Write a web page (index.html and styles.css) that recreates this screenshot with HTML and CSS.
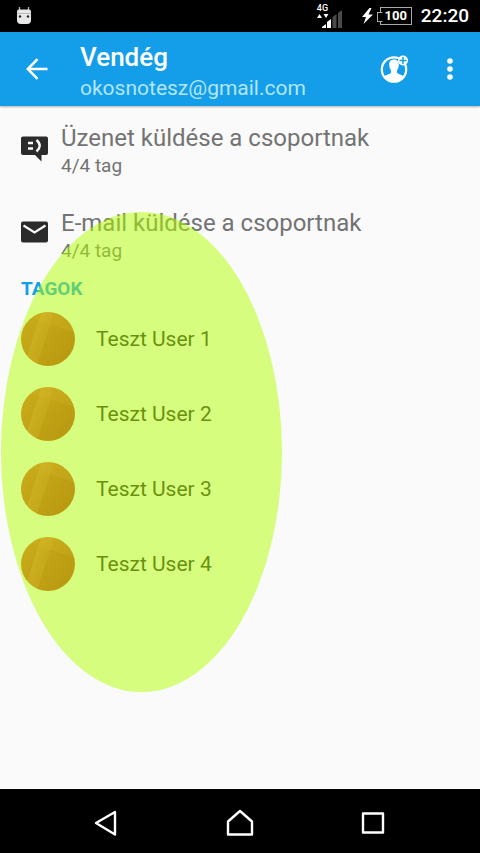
FILE: index.html
```html
<!DOCTYPE html>
<html lang="hu">
<head>
<meta charset="utf-8">
<meta name="viewport" content="width=device-width, initial-scale=1">
<title>Vendég</title>
<link rel="stylesheet" href="styles.css">
</head>
<body>
<div class="status">
  <svg class="status-robot" width="16" height="20" viewBox="0 0 16 20" aria-hidden="true">
    <path d="M3.500 1v4M12.500 1v4" stroke="#bbb" stroke-width="1.300"/>
    <path d="M1 5.500q0-2 2-2h10q2 0 2 2V14q0 4-4 4H5q-4 0-4-4z" fill="#e8e8e8"/>
    <path d="M1 7.500h14" stroke="#999" stroke-width=".6"/>
    <circle cx="4" cy="10.500" r="1.200" fill="#222"/><circle cx="12" cy="10.500" r="1.200" fill="#222"/>
  </svg>
  <div class="signal">
    <span class="network">4G</span>
    <svg width="26" height="16" viewBox="0 0 26 16" aria-hidden="true">
      <path d="M0 5l2.500-4L5 5zM6.500 1h5L9 5z" fill="#fff"/>
      <path d="M5 15v-1l4-3v4z" fill="#fff"/>
      <path d="M10 15V9l4-3v9z" fill="#fff"/>
      <path d="M15.500 15V4l4-3v14zM21 15V0l4-3v18z" fill="#4a4a4a"/>
    </svg>
  </div>
  <svg class="bolt" width="11" height="16" viewBox="0 0 11 16" aria-hidden="true"><path d="M7.500 0L0 9h4L1.500 16 11 6.500H6.500L9.500 0z" fill="#fff"/></svg>
  <div class="battery"><span>100</span></div>
  <time class="clock">22:20</time>
</div>
<header class="appbar">
  <button class="icon-button" aria-label="Vissza">
    <svg width="22" height="22" viewBox="0 0 22 22" fill="none" stroke="#fff" stroke-width="2.500"><path d="M21.500 11H2M11.500 1.200L1.800 11l9.700 9.800"/></svg>
  </button>
  <div class="heading">
    <h1>Vendég</h1>
    <p>okosnotesz@gmail.com</p>
  </div>
  <button class="icon-button" aria-label="Tag hozzáadása">
    <svg width="30" height="30" viewBox="0 0 30 30">
      <circle cx="15" cy="15.500" r="12.200" fill="none" stroke="#fff" stroke-width="2.200"/>
      <path d="M15 5.500c3.400 0 4.800 2.200 4.800 5.200 0 2.600-.9 4.300-1.800 5.500v2.200c0 1.600 5.500 1.900 7.400 4.600-2 3-5.700 5-10.400 5s-8.400-2-10.400-5c1.900-2.700 7.400-3 7.400-4.600v-2.200c-.9-1.200-1.800-2.900-1.800-5.500 0-3 1.400-5.200 4.800-5.200z" fill="#fff"/>
      <circle cx="24" cy="6.500" r="5" fill="#fff"/>
      <path d="M24 3v7M20.500 6.500h7" stroke="#149ee9" stroke-width="1.500"/>
    </svg>
  </button>
  <button class="icon-button menu" aria-label="További lehetőségek">
    <svg width="6" height="24" viewBox="0 0 6 24" fill="#fff"><circle cx="3" cy="4" r="2.800"/><circle cx="3" cy="12" r="2.800"/><circle cx="3" cy="20" r="2.800"/></svg>
  </button>
</header>
<main>
  <button class="action">
    <svg width="27" height="32" viewBox="0 0 27 32">
      <path d="M2 1.500h23q2 0 2 2V18q0 2-2 2h-4.500v6.500L14 20H2q-2 0-2-2V3.500q0-2 2-2z" fill="#2b2b2b"/>
      <path d="M7 8h5M7 13.500h5" stroke="#fafafa" stroke-width="2.400"/>
      <path d="M15.500 5q6.500 5.700 0 11.500" stroke="#fafafa" stroke-width="2.400" fill="none"/>
    </svg>
    <span class="action-text"><span class="action-title">Üzenet küldése a csoportnak</span><span class="action-sub">4/4 tag</span></span>
  </button>
  <button class="action">
    <svg width="27" height="32" viewBox="0 0 27 32">
      <rect x="0" y="1.500" width="27" height="21" rx="2" fill="#2b2b2b"/>
      <path d="M2.500 5.500l11 7 11-7" stroke="#fafafa" stroke-width="2.200" fill="none"/>
    </svg>
    <span class="action-text"><span class="action-title">E-mail küldése a csoportnak</span><span class="action-sub">4/4 tag</span></span>
  </button>
  <h2>TAGOK</h2>
  <ul class="members">
    <li><span class="avatar"></span>Teszt User 1</li>
    <li><span class="avatar"></span>Teszt User 2</li>
    <li><span class="avatar"></span>Teszt User 3</li>
    <li><span class="avatar"></span>Teszt User 4</li>
  </ul>
  <div class="highlight"></div>
</main>
<nav class="navbar">
  <button aria-label="Vissza"><svg width="28" height="28" viewBox="0 0 28 28"><path d="M3 14L22 3v22.500z"/></svg></button>
  <button aria-label="Kezdőlap"><svg width="28" height="28" viewBox="0 0 28 28"><path d="M2 12.500L14 2l12 10.500V25.500H2z"/></svg></button>
  <button aria-label="Áttekintés"><svg width="28" height="28" viewBox="0 0 28 28"><path d="M4 4.500h20v19H4z"/></svg></button>
</nav>
</body>
</html>
```
FILE: styles.css
```css
* { box-sizing: border-box; }
body {
  margin: 0;
  min-height: 100vh;
  display: flex;
  flex-direction: column;
  background: #fafafa;
  font-family: Roboto, "Liberation Sans", sans-serif;
}
h1, h2, p, ul { margin: 0; padding: 0; }
button {
  border: 0;
  padding: 0;
  background: none;
  font-family: inherit;
  color: inherit;
  text-align: left;
}
svg { display: block; flex: none; overflow: visible; }

.status {
  display: flex;
  align-items: center;
  height: 32px;
  padding: 0 11px 0 16px;
  background: #000;
  color: #fff;
}
.status-robot { margin-right: auto; }
.signal { margin-right: 19px; }
.network { display: block; font-size: 9px; line-height: 10px; font-weight: 500; }
.bolt { margin-right: 4px; }
.battery {
  position: relative;
  width: 32px;
  height: 18px;
  margin: 0 9px 0 3px;
  border: 1px solid #aaa;
  font-size: 13px;
  line-height: 16px;
  font-weight: 700;
  text-align: center;
}
.battery::before {
  content: "";
  position: absolute;
  left: -4px;
  top: 4px;
  width: 4px;
  height: 8px;
  border: 1px solid #aaa;
  border-right-color: #000;
  background: #000;
}
.clock { font-size: 19px; line-height: 32px; font-weight: 500; }

.appbar {
  position: relative;
  display: flex;
  align-items: center;
  height: 74px;
  padding: 0 12px 0 19px;
  background: #149ee9;
  color: #fff;
  box-shadow: 0 1px 2px rgba(0, 0, 0, .3);
}
.icon-button {
  display: flex;
  justify-content: center;
  align-items: center;
  width: 36px;
  height: 48px;
}
.icon-button.menu { margin-left: 20px; }
.heading { flex: 1; padding: 4px 0 0 25px; }
.heading h1 { font-size: 26px; line-height: 34px; font-weight: 500; }
.heading p { font-size: 21px; line-height: 28px; color: #b2e6fa; }

main { position: relative; flex: 1; padding-top: 2px; }
.action {
  display: flex;
  align-items: center;
  width: 100%;
  height: 85px;
  padding: 0 21px;
  gap: 13px;
}
.action-title { display: block; font-size: 24px; line-height: 30px; color: #737373; }
.action-sub { display: block; font-size: 19px; line-height: 26px; color: #737373; }
h2 {
  padding: 1px 21px 0;
  margin-bottom: 2px;
  font-size: 19px;
  line-height: 20px;
  font-weight: 700;
  color: #149ee9;
}
.members { list-style: none; }
.members li {
  display: flex;
  align-items: center;
  gap: 21px;
  height: 75px;
  padding: 0 21px;
  font-size: 21px;
  color: #212121;
}
.avatar {
  width: 54px;
  height: 54px;
  border-radius: 50%;
  background:
    linear-gradient(108deg, transparent 28%, rgba(255, 140, 100, .3) 29%, rgba(255, 120, 90, .25) 46%, transparent 47%),
    linear-gradient(198deg, rgba(255, 120, 90, .2) 28%, transparent 29%),
    linear-gradient(130deg, #e25a36, #be2e20);
}
.highlight {
  position: absolute;
  left: 1px;
  top: 106px;
  width: 281px;
  height: 480px;
  border-radius: 50%;
  background: rgba(178, 255, 0, .5);
  pointer-events: none;
}

.navbar {
  display: flex;
  justify-content: center;
  gap: 105px;
  height: 64px;
  padding-top: 4px;
  background: #000;
}
.navbar button { display: flex; align-items: center; }
.navbar path { fill: none; stroke: #fff; stroke-width: 2.4; stroke-linejoin: round; }
```
